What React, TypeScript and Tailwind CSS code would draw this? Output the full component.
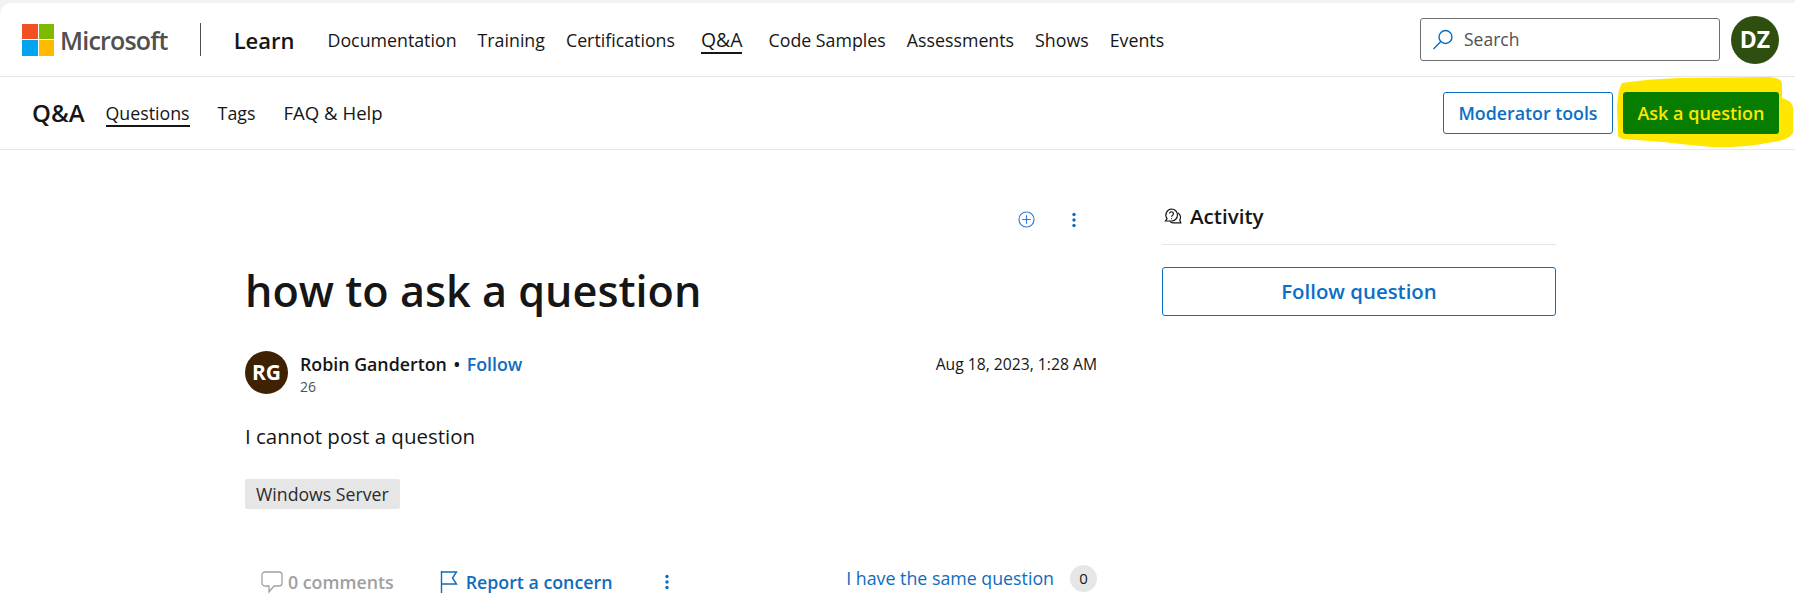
import React from 'react';

const font = { fontFamily: '"Open Sans", "Noto Sans", sans-serif' };

const mainLinks = ['Documentation', 'Training', 'Certifications', 'Q&A', 'Code Samples', 'Assessments', 'Shows', 'Events'];

const MicrosoftLogo: React.FC = () => (
  <div className="grid grid-cols-2 gap-[1px] w-[32px] h-[32px]">
    <div className="bg-[#f25022]" />
    <div className="bg-[#7fba00]" />
    <div className="bg-[#00a4ef]" />
    <div className="bg-[#ffb900]" />
  </div>
);

const SearchIcon: React.FC = () => (
  <svg width="22" height="22" viewBox="0 0 22 22" fill="none" stroke="#0f6cbd" strokeWidth="1.4">
    <circle cx="13.5" cy="8" r="6.5" />
    <path d="M8.8 12.6 L1.5 20" />
  </svg>
);

const PlusCircleIcon: React.FC = () => (
  <svg width="17" height="17" viewBox="0 0 18 18" fill="none" stroke="#2a7bd6" strokeWidth="1.2">
    <circle cx="9" cy="9" r="8" />
    <path d="M9 4.5 V13.5 M4.5 9 H13.5" />
  </svg>
);

const MoreIcon: React.FC = () => (
  <svg width="4" height="16" viewBox="0 0 4 16" fill="#0f6cbd">
    <circle cx="2" cy="2.5" r="1.7" />
    <circle cx="2" cy="8" r="1.7" />
    <circle cx="2" cy="13.5" r="1.7" />
  </svg>
);

const ActivityIcon: React.FC = () => (
  <svg width="18" height="18" viewBox="0 0 18 18" fill="none" stroke="#161616" strokeWidth="1.2">
    <path d="M7.5 1 a6 6 0 0 1 6 6 a6 6 0 0 1 -6 6 H1.5 l1.6 -2.4 a6 6 0 0 1 4.4 -9.6 Z" />
    <path d="M14 5 a5 5 0 0 1 1.8 7 l1 2.8 H9 a5 5 0 0 1 -3 -1.5" />
    <path d="M5.6 5.6 a1.9 1.9 0 1 1 3 1.6 c-0.7 0.4 -1 0.8 -1 1.5" />
    <circle cx="7.6" cy="10.6" r="0.6" fill="#161616" stroke="none" />
  </svg>
);

const CommentIcon: React.FC = () => (
  <svg width="22" height="24" viewBox="0 0 22 24" fill="none" stroke="#a0a0a0" strokeWidth="1.3">
    <path d="M4 2 H18 a3 3 0 0 1 3 3 V13 a3 3 0 0 1 -3 3 H13 L8 22 V16 H4 a3 3 0 0 1 -3 -3 V5 a3 3 0 0 1 3 -3 Z" />
  </svg>
);

const FlagIcon: React.FC = () => (
  <svg width="18" height="24" viewBox="0 0 18 24" fill="none" stroke="#0f6cbd" strokeWidth="1.4">
    <path d="M1.5 1 V23" />
    <path d="M1.5 2 H16.5 L12.5 8 L16.5 14 H1.5" />
  </svg>
);

// the yellow marker someone drew around the button
const Highlight: React.FC = () => (
  <svg className="absolute left-[-6px] top-[-15px]" width="176" height="70" viewBox="0 0 176 70" fill="#ffe600">
    <path d="M5 6 Q30 2 63 1 L153 0 Q164 1 165 6 L165 21 Q175 24 176 30 L176 56 Q172 63 156 65 Q125 71 96 70 Q70 68 46 65 L6 62 Q0 61 1 56 L0 30 Q1 12 5 6 Z" />
  </svg>
);

export default function App() {
  return (
    <div style={font} className="h-[604px] overflow-hidden bg-[#f2f2f2] pt-[3px] text-[#161616]">
      <div className="h-full bg-white rounded-tl-[12px]">
        {/* Global nav */}
        <header className="flex items-center h-[74px] border-b border-[#e6e6e6] pl-[22px] pr-[16px]">
          <MicrosoftLogo />
          <span className="ml-[6px] mt-[2px] text-[25px] font-semibold tracking-[-0.8px] text-[#505050]">Microsoft</span>
          <div className="ml-[32px] w-px h-[33px] bg-[#505050]" />
          <span className="ml-[33px] mt-[2px] text-[22px] font-semibold">Learn</span>
          <nav className="flex items-center ml-[33px] gap-[21px] h-full">
            {mainLinks.map((link) => (
              <a
                key={link}
                className={
                  link === 'Q&A'
                    ? 'text-[19.4px] leading-[22px] py-[1px] mx-[5px] border-y-2 border-t-transparent border-b-[#161616]'
                    : 'text-[17.8px] leading-[22px] py-[1px] border-y-2 border-transparent'
                }
              >
                {link}
              </a>
            ))}
          </nav>
          <div className="ml-auto flex items-center gap-[11px]">
            <div className="flex items-center w-[300px] h-[43px] border border-[#6e6e6e] rounded-[3px] pl-[11px]">
              <SearchIcon />
              <span className="ml-[10px] text-[17.5px] text-[#505050]">Search</span>
            </div>
            <div className="flex items-center justify-center w-[48px] h-[48px] rounded-full bg-[#2e4f10] text-white text-[23px] font-bold">DZ</div>
          </div>
        </header>

        {/* Q&A sub nav */}
        <div className="flex items-center h-[73px] border-b border-[#e6e6e6] pl-[32px] pr-[16px]">
          <span className="text-[24px] font-semibold">Q&amp;A</span>
          <nav className="flex items-center ml-[21px] gap-[28px]">
            <a className="text-[17.8px] leading-[22px] py-[1px] border-y-2 border-t-transparent border-b-[#161616]">Questions</a>
            <a className="text-[17.8px] leading-[22px] py-[1px] border-y-2 border-transparent">Tags</a>
            <a className="text-[18.6px] leading-[22px] py-[1px] border-y-2 border-transparent">FAQ &amp; Help</a>
          </nav>
          <div className="ml-auto flex items-center gap-[10px]">
            <button className="w-[170px] h-[42px] border border-[#0b6fc6] rounded-[3px] text-[#0b6fc6] text-[17.8px] font-semibold">Moderator tools</button>
            <div className="relative">
              <Highlight />
              <button className="relative w-[156px] h-[42px] rounded-[3px] bg-[#077d00] text-[#ffe600] text-[18px] font-semibold">Ask a question</button>
            </div>
          </div>
        </div>

        <main className="flex pl-[245px] gap-[65px]">
          {/* Question */}
          <div className="w-[852px]">
            <div className="flex justify-end items-center gap-[37px] pt-[59px] pr-[21px] h-[80px]">
              <PlusCircleIcon />
              <MoreIcon />
            </div>
            <h1 className="mt-[31px] text-[43.2px] leading-[60px] font-semibold">how to ask a question</h1>
            <div className="flex items-start mt-[30px]">
              <div className="flex items-center justify-center w-[43px] h-[43px] rounded-full bg-[#3f2104] text-white text-[21px] font-bold">RG</div>
              <div className="ml-[12px] pt-[1px]">
                <div className="text-[17.8px] leading-[24px] font-semibold">
                  Robin Ganderton <span className="mx-[2px]">•</span> <a className="text-[#0f6cbd]">Follow</a>
                </div>
                <div className="mt-[2px] text-[14px] leading-[18px] text-[#505050]">26</div>
              </div>
              <div className="ml-auto pt-[1px] text-[15.7px] leading-[24px]">Aug 18, 2023, 1:28 AM</div>
            </div>
            <p className="mt-[26px] text-[20.5px] leading-[28px]">I cannot post a question</p>
            <div className="mt-[29px] inline-flex items-center h-[30px] px-[11px] rounded-[2px] bg-[#e6e6e6] text-[17.7px] text-[#2b2b2b]">Windows Server</div>
            <div className="flex items-center mt-[58px] h-[30px]">
              <div className="flex items-center ml-[16px] gap-[5px] text-[#a0a0a0] text-[17.8px] font-semibold">
                <CommentIcon />
                <span>0 comments</span>
              </div>
              <div className="flex items-center ml-[46px] gap-[8px] text-[#0f6cbd] text-[17.8px] font-semibold">
                <FlagIcon />
                <span>Report a concern</span>
              </div>
              <div className="ml-[53px]"><MoreIcon /></div>
              <div className="ml-auto mb-[7px] flex items-center gap-[16px]">
                <a className="text-[#0f6cbd] text-[17.8px]">I have the same question</a>
                <span className="flex items-center justify-center w-[27px] h-[27px] rounded-full bg-[#e6e6e6] text-[15px]">0</span>
              </div>
            </div>
          </div>

          {/* Activity */}
          <aside className="w-[394px]">
            <div className="flex items-center h-[95px] pt-[39px] border-b border-[#e6e6e6] gap-[8px] pl-[2px]">
              <ActivityIcon />
              <span className="text-[20.6px] font-semibold">Activity</span>
            </div>
            <button className="mt-[22px] w-full h-[49px] border border-[#0b6fc6] rounded-[3px] text-[#0b6fc6] text-[20.4px] font-semibold">Follow question</button>
          </aside>
        </main>
      </div>
    </div>
  );
}
